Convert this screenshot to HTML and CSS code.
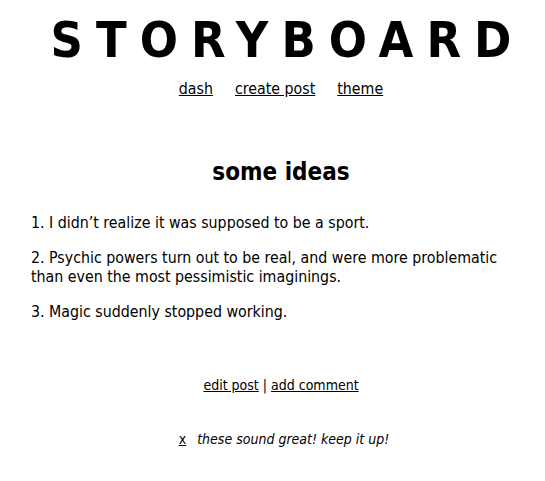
FILE: index.html
```html
<!DOCTYPE html>
<html>
<head>
<meta charset="utf-8">
<link rel="stylesheet" href="styles.css">
</head>
<body>
<header class="site-header">
  <h1 class="logo">STORYBOARD</h1>
  <nav class="nav">
    <a href="#">dash</a>
    <a href="#">create post</a>
    <a href="#">theme</a>
  </nav>
</header>
<main class="post">
  <h2 class="post-title">some ideas</h2>
  <div class="post-body">
    <p>1. I didn’t realize it was supposed to be a sport.</p>
    <p>2. Psychic powers turn out to be real, and were more problematic than even the most pessimistic imaginings.</p>
    <p>3. Magic suddenly stopped working.</p>
  </div>
  <div class="post-actions">
    <a href="#">edit post</a> | <a href="#">add comment</a>
  </div>
  <div class="comment">
    <a href="#" class="del">x</a>
    <em>these sound great! keep it up!</em>
  </div>
</main>
</body>
</html>
```
FILE: styles.css
```css
body {
  margin: 0;
  font-family: "DejaVu Sans Condensed", "DejaVu Sans", sans-serif;
  font-size: 15.8px;
  color: #000;
  background: #fff;
}
a { color: #000; }
.site-header {
  text-align: center;
  padding: 16px 14px 0 31px;
}
.logo {
  margin: 0;
  font-size: 50px;
  line-height: 48px;
  letter-spacing: 13px;
  padding-left: 13px;
  font-weight: bold;
}
.nav {
  margin-top: 15px;
  display: flex;
  justify-content: center;
  gap: 22px;
  line-height: 19px;
}
.post {
  padding: 0 14px 0 31px;
}
.post-title {
  text-align: center;
  font-size: 24px;
  margin: 60px 0 0;
  line-height: 28px;
}
.post-body {
  margin-top: 27px;
}
.post-body p {
  margin: 0 0 16px;
  line-height: 19px;
}
.post-actions {
  text-align: center;
  margin-top: 56px;
  font-size: 14px;
  line-height: 17px;
}
.comment {
  text-align: center;
  margin-top: 37px;
  font-size: 14px;
  line-height: 17px;
  padding-left: 6px;
}
.comment .del { margin-right: 7px; }
```
